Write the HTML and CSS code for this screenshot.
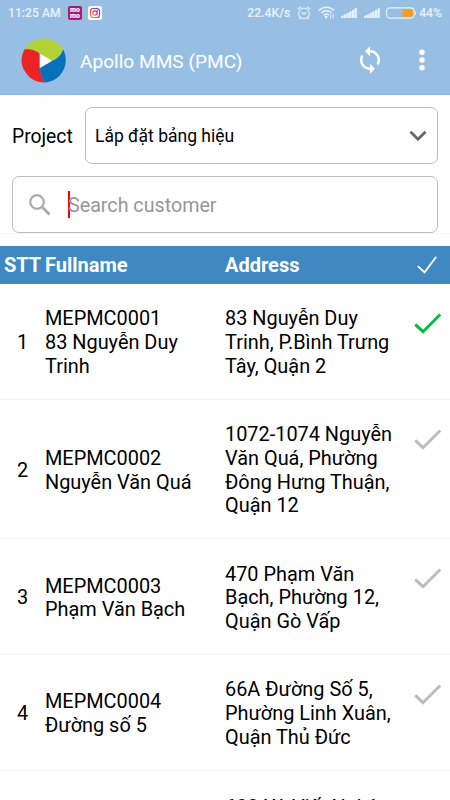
FILE: index.html
```html
<!DOCTYPE html>
<html lang="vi">
<head>
    <meta charset="UTF-8">
    <meta name="viewport" content="width=device-width, initial-scale=1.0">
    <title>Apollo MMS (PMC)</title>
    <link rel="stylesheet" href="styles.css">
</head>
<body>
<div class="top">
    <div class="status-bar">
        <span class="time">11:25 AM</span>
        <span class="momo"><span>mo</span><span>mo</span></span>
        <svg class="insta" width="14" height="14" viewBox="0 0 14 14">
            <defs>
                <linearGradient id="insta-color" x1="0" y1="1" x2="1" y2="0">
                    <stop offset="0" stop-color="#fa9a2c"/>
                    <stop offset=".5" stop-color="#e0306c"/>
                    <stop offset="1" stop-color="#6a35d0"/>
                </linearGradient>
            </defs>
            <rect width="14" height="14" rx="2.5" fill="#fff"/>
            <rect x="2.5" y="2.5" width="9" height="9" rx="2.6" fill="none" stroke="url(#insta-color)" stroke-width="1.2"/>
            <circle cx="7" cy="7" r="2.2" fill="none" stroke="url(#insta-color)" stroke-width="1.2"/>
            <circle cx="9.6" cy="4.4" r=".6" fill="#8a35c0"/>
        </svg>
        <span class="speed">22.4K/s</span>
        <svg class="alarm" width="14" height="14" viewBox="0 0 14 14" fill="none" stroke="#e9f2fa" stroke-width="1.1" stroke-linecap="round">
            <circle cx="7" cy="7.4" r="5.3"/>
            <path d="M.9 3.2 3.3 1M13.1 3.2 10.7 1M4.7 6.4 7 8.2 9.2 6.4M3.2 11.8l-1 1.2M10.8 11.8l1 1.2"/>
        </svg>
        <svg class="wifi" width="17" height="13" viewBox="0 0 17 13" fill="none" stroke="#e9f2fa" stroke-width="1.5">
            <path d="M.8 4.6C5 .2 11.8 .2 16 4.6M3.2 7C6.2 4 10.5 4 13.6 7M5.5 9.3C7.4 7.5 9 7.5 10.8 9"/>
            <circle cx="8.2" cy="11" r="1.4" fill="#e9f2fa" stroke="none"/>
            <path d="M12.5 12.5V8.5M15 8v4.5" stroke-width="1"/>
        </svg>
        <svg class="signal" width="16" height="11" viewBox="0 0 16 11" fill="#e9f2fa">
            <path d="M0 9.3 2.3 8.3V11H0zM2.7 8 5 7V11H2.7zM5.4 6.6 7.7 5.5V11H5.4zM8.1 5.1l2.3-1.1v7H8.1zM10.8 3.5l2.3-1.2V11h-2.3zM13.5 1.8l2.3-1.3V11h-2.3z"/>
        </svg>
        <svg class="signal signal-2" width="16" height="11" viewBox="0 0 16 11" fill="#e9f2fa">
            <path d="M0 9.3 2.3 8.3V11H0zM2.7 8 5 7V11H2.7zM5.4 6.6 7.7 5.5V11H5.4zM8.1 5.1l2.3-1.1v7H8.1zM10.8 3.5l2.3-1.2V11h-2.3zM13.5 1.8l2.3-1.3V11h-2.3z"/>
        </svg>
        <svg class="battery" width="30" height="12" viewBox="0 0 30 12">
            <rect x=".6" y=".9" width="27.5" height="10.2" rx="3.5" fill="none" stroke="#e9f2fa" stroke-width="1.1"/>
            <path d="M29.2 4v4" stroke="#e9f2fa" stroke-width="1"/>
            <path d="M16.5 2.3h8.8a1.8 1.8 0 0 1 1.8 1.8v3.8a1.8 1.8 0 0 1-1.8 1.8h-8.8z" fill="#ff9a1a"/>
        </svg>
        <span class="percent">44%</span>
    </div>
    <div class="app-bar">
        <svg class="logo" width="46" height="46" viewBox="0 0 46 46">
            <path d="M3.5 12.3C12 11 17 15 19 17L31 24C37 21 41 17 42 12.3A22.5 22.5 0 0 0 3.5 12.3z" fill="#b2d235"/>
            <path d="M3.5 12.3C11 11.5 16 14 19 17V31C19 37 21 42 24.5 45.5A22.5 22.5 0 0 1 3.5 12.3z" fill="#ec2227"/>
            <path d="M42 12.3C41 17 37 22 31 24L19 31C19 37 21 42 24.5 45.5A22.5 22.5 0 0 0 42 12.3z" fill="#0670bb"/>
            <path d="M18.7 16.6 31 23.8 18.7 31z" fill="#fff"/>
        </svg>
        <h1 class="title">Apollo MMS (PMC)</h1>
        <svg class="sync" width="30" height="30" viewBox="0 0 24 24" fill="#fff">
            <path d="M12 4V1L8 5l4 4V6c3.31 0 6 2.69 6 6 0 1.01-.25 1.97-.7 2.8l1.46 1.46C19.54 15.03 20 13.57 20 12c0-4.42-3.58-8-8-8zm0 14c-3.31 0-6-2.69-6-6 0-1.01.25-1.97.7-2.8L5.24 7.74C4.46 8.97 4 10.43 4 12c0 4.42 3.58 8 8 8v3l4-4-4-4v3z"/>
        </svg>
        <svg class="more" width="6" height="22" viewBox="0 0 6 22" fill="#fff">
            <circle cx="3" cy="3.3" r="2.7"/><circle cx="3" cy="11" r="2.7"/><circle cx="3" cy="18.7" r="2.7"/>
        </svg>
    </div>
</div>

<div class="filters">
    <div class="project">
        <span class="project-label">Project</span>
        <div class="select">
            <span>Lắp đặt bảng hiệu</span>
            <svg width="18" height="12" viewBox="0 0 18 12" fill="none" stroke="#696969" stroke-width="3">
                <path d="M1.5 1.7 9 9.2 16.5 1.7"/>
            </svg>
        </div>
    </div>
    <div class="search">
        <svg width="22" height="22" viewBox="0 0 22 22" fill="none" stroke="#aaa">
            <circle cx="8" cy="8" r="6.8" stroke-width="2.2"/>
            <path d="M12.8 12.8 20.5 20.5" stroke-width="2.8"/>
        </svg>
        <span class="cursor"></span>
        <span class="placeholder">Search customer</span>
    </div>
</div>

<div class="table">
    <div class="table-head">
        <div class="stt">STT</div>
        <div class="name">Fullname</div>
        <div class="address">Address</div>
        <svg class="check" width="20" height="18" viewBox="0 0 20 18" fill="none" stroke="#fff" stroke-width="1.8">
            <path d="M.8 10.2 7.6 16.3 19.2.7"/>
        </svg>
    </div>
    <div class="row">
        <div class="stt">1</div>
        <div class="name">MEPMC0001<br>83 Nguyễn Duy<br>Trinh</div>
        <div class="address">83 Nguyễn Duy<br>Trinh, P.Bình Trưng<br>Tây, Quận 2</div>
        <svg class="check done" width="28" height="22" viewBox="0 0 28 22"><path d="M1.2 11.3 9 18.7 26.2 1.5"/></svg>
    </div>
    <div class="row">
        <div class="stt">2</div>
        <div class="name">MEPMC0002<br>Nguyễn Văn Quá</div>
        <div class="address">1072-1074 Nguyễn<br>Văn Quá, Phường<br>Đông Hưng Thuận,<br>Quận 12</div>
        <svg class="check" width="28" height="22" viewBox="0 0 28 22"><path d="M1.2 11.3 9 18.7 26.2 1.5"/></svg>
    </div>
    <div class="row">
        <div class="stt">3</div>
        <div class="name">MEPMC0003<br>Phạm Văn Bạch</div>
        <div class="address">470 Phạm Văn<br>Bạch, Phường 12,<br>Quận Gò Vấp</div>
        <svg class="check" width="28" height="22" viewBox="0 0 28 22"><path d="M1.2 11.3 9 18.7 26.2 1.5"/></svg>
    </div>
    <div class="row">
        <div class="stt">4</div>
        <div class="name">MEPMC0004<br>Đường số 5</div>
        <div class="address">66A Đường Số 5,<br>Phường Linh Xuân,<br>Quận Thủ Đức</div>
        <svg class="check" width="28" height="22" viewBox="0 0 28 22"><path d="M1.2 11.3 9 18.7 26.2 1.5"/></svg>
    </div>
    <div class="row">
        <div class="stt"></div>
        <div class="name"></div>
        <div class="address">688 Xô Viết Nghệ</div>
        <svg class="check" width="28" height="22" viewBox="0 0 28 22"><path d="M1.2 11.3 9 18.7 26.2 1.5"/></svg>
    </div>
</div>
</body>
</html>
```

FILE: styles.css
```css
* {
    box-sizing: border-box;
}
body {
    margin: 0;
    width: 450px;
    height: 800px;
    overflow: hidden;
    display: flex;
    flex-direction: column;
    background-color: #fff;
    color: #000;
    font-family: Roboto, sans-serif;
    font-size: 20px;
}
svg {
    display: block;
    flex-shrink: 0;
}
.top {
    height: 95px;
    flex-shrink: 0;
    background-color: #97bfe4;
    border-bottom: 1px solid #8abbe6;
}
.status-bar {
    height: 25px;
    padding: 0 8px;
    display: flex;
    align-items: center;
    color: #e9f2fa;
    font-size: 12.2px;
    font-weight: 500;
    white-space: nowrap;
}
.time {
    width: 60px;
}
.momo {
    width: 14px;
    height: 14px;
    border-radius: 2px;
    background-color: #b0176b;
    color: #fff;
    font-size: 7px;
    font-weight: 900;
    line-height: 6px;
    display: flex;
    flex-direction: column;
    align-items: center;
    justify-content: center;
}
.insta {
    margin-left: 6px;
}
.speed {
    margin-left: auto;
}
.alarm {
    margin-left: 7px;
}
.wifi {
    margin-left: 7px;
}
.signal {
    margin-left: 6px;
}
.signal-2 {
    margin-left: 7px;
}
.battery {
    margin-left: 6px;
}
.percent {
    margin-left: 3px;
}
.app-bar {
    height: 69px;
    padding: 0 25px 0 21px;
    display: flex;
    align-items: center;
}
.title {
    margin: 4px 0 0 13px;
    flex: 1;
    color: #fff;
    font-size: 19.1px;
    line-height: 24px;
    font-weight: 400;
}
.sync {
    margin-right: 34px;
}
.filters {
    height: 139px;
    flex-shrink: 0;
    margin-bottom: 12px;
    padding: 12px 12px 0;
    border-bottom: 1px solid #f5f5f5;
}
.project {
    display: flex;
    align-items: center;
    margin-bottom: 12px;
}
.project-label {
    width: 73px;
    padding-top: 2px;
    font-size: 19.3px;
}
.select,
.search {
    height: 57px;
    border: 1px solid #bdbdbd;
    border-radius: 7px;
    display: flex;
    align-items: center;
}
.select {
    flex: 1;
    justify-content: space-between;
    padding: 0 10px 0 9px;
    font-size: 17.5px;
}
.search {
    padding-left: 16px;
    color: #969696;
    font-size: 19.7px;
}
.placeholder {
    padding-top: 2px;
}
.cursor {
    width: 2px;
    height: 27px;
    margin: 0 -2px 0 17px;
    background-color: #f00;
}
.table-head,
.row {
    display: grid;
    grid-template-columns: 45px 180px 189px 36px;
    align-items: center;
}
.table-head {
    height: 38px;
    background-color: #4088c2;
    color: #fff;
    font-weight: 700;
}
.table-head .stt {
    padding-left: 4px;
}
.table-head .check {
    margin-left: 3px;
}
.row {
    padding: 23.3px 0 20.1px;
    border-bottom: 1px solid #f2f2f2;
    font-size: 19.9px;
    line-height: 23.8px;
}
.row .stt {
    text-align: center;
}
.row .check {
    align-self: start;
    margin-top: 5.5px;
    fill: none;
    stroke: #bdbdbd;
    stroke-width: 3;
}
.row .done {
    stroke: #00bf43;
}
```
